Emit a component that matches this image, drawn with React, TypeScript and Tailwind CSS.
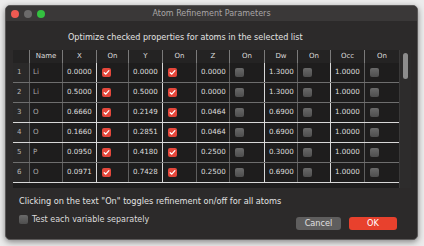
import React from "react";

const headers = ["", "Name", "X", "On", "Y", "On", "Z", "On", "Dw", "On", "Occ", "On"];

const rows = [
  ["1", "Li", "0.0000", true, "0.0000", true, "0.0000", false, "1.3000", false, "1.0000", false],
  ["2", "Li", "0.5000", true, "0.5000", true, "0.0000", false, "1.3000", false, "1.0000", false],
  ["3", "O", "0.6660", true, "0.2149", true, "0.0464", false, "0.6900", false, "1.0000", false],
  ["4", "O", "0.1660", true, "0.2851", true, "0.0464", false, "0.6900", false, "1.0000", false],
  ["5", "P", "0.0950", true, "0.4180", true, "0.2500", false, "0.3000", false, "1.0000", false],
  ["6", "O", "0.0971", true, "0.7428", true, "0.2500", false, "0.6900", false, "1.0000", false],
];

// columns whose right edge draws a bright line in the grid
const brightCols = [2, 4, 7, 9];
const brightRows = [2, 3, 5];

function Check({ on }: { on: boolean }) {
  if (!on) {
    return <div className="h-[9px] w-[9px] rounded-[2px] bg-gradient-to-b from-[#6a6a6a] to-[#4e4e4e]" />;
  }
  return (
    <div className="flex h-[9px] w-[9px] items-center justify-center rounded-[2px] bg-[#e4473b]">
      <svg width="7" height="7" viewBox="0 0 7 7">
        <path d="M1.2 3.7 L2.8 5.2 L5.9 1.6" fill="none" stroke="#fff" strokeWidth="1.2" strokeLinecap="round" strokeLinejoin="round" />
      </svg>
    </div>
  );
}

export default function App() {
  const gridCols = "grid grid-cols-[17px_33px_34px_32px_34px_34px_33px_35px_33px_33px_34px_34px]";
  return (
    <div className="h-[246px] w-[424px] bg-[#ececec] pl-[5px] pt-[5px] font-['DejaVu_Sans',sans-serif]">
      <div className="flex h-[235px] w-[413px] flex-col overflow-hidden rounded-[5px] border border-[#5a5858] bg-[#2c2a2a] shadow-[0_2px_6px_rgba(0,0,0,0.45)]">
        {/* title bar */}
        <div className="relative flex h-[15px] shrink-0 items-center bg-[#3a3838]">
          <div className="ml-[5px] flex gap-[5px]">
            <span className="h-[8px] w-[8px] rounded-full bg-[#ee5a52]" />
            <span className="h-[8px] w-[8px] rounded-full bg-[#6b6a6a]" />
            <span className="h-[8px] w-[8px] rounded-full bg-[#34c140]" />
          </div>
          <div className="absolute inset-0 flex items-center justify-center text-[8px] text-[#a8a6a6]">
            Atom Refinement Parameters
          </div>
        </div>

        <div className="ml-[62px] mt-[11px] text-[8.1px] leading-[10px] text-[#e2e2e2]">
          Optimize checked properties for atoms in the selected list
        </div>

        {/* table */}
        <div className="ml-[7px] mt-[8px] flex h-[138px] w-[398px] bg-[#1e1d1d]">
          <div className="flex flex-col">
            <div className={`${gridCols} h-[13px] bg-[#242323]`}>
              {headers.map((h, i) => (
                <div
                  key={i}
                  className={`flex items-center justify-center text-[7px] text-[#dcdcdc] ${i < 11 ? "border-r border-[#7a7a7a]" : ""}`}
                >
                  {h}
                </div>
              ))}
            </div>
            {rows.map((r, ri) => (
              <div
                key={ri}
                className={`${gridCols} h-[20px] border-b ${brightRows.includes(ri) ? "border-[#d8d8d8]" : "border-[#6e6e6e]"}`}
              >
                {r.map((c, ci) => {
                  const br = ci < 11
                    ? brightCols.includes(ci)
                      ? "border-r border-[#d8d8d8]"
                      : "border-r border-[#5e5e5e]"
                    : "";
                  if (ci === 0) {
                    return (
                      <div key={ci} className={`flex items-center bg-[#2a2929] pl-[4px] text-[7px] text-[#b8b8b8] ${br}`}>
                        {c as string}
                      </div>
                    );
                  }
                  if (typeof c === "boolean") {
                    return (
                      <div key={ci} className={`flex items-center pl-[5px] ${br}`}>
                        <Check on={c} />
                      </div>
                    );
                  }
                  return (
                    <div
                      key={ci}
                      className={`flex items-center text-[7.1px] ${ci === 1 ? "pl-[3px] text-[#a8a8a8]" : "pl-[4px] text-[#dedede]"} ${br}`}
                    >
                      {c}
                    </div>
                  );
                })}
              </div>
            ))}
          </div>
          {/* scrollbar */}
          <div className="flex w-[12px] justify-center border-l border-[#3a3939] bg-[#2d2c2c] pt-[3px]">
            <div className="h-[26px] w-[5px] rounded-full bg-[#8d8d8d]" />
          </div>
        </div>

        <div className="ml-[13px] mt-[8px] text-[8.2px] leading-[10px] text-[#e2e2e2]">
          Clicking on the text "On" toggles refinement on/off for all atoms
        </div>

        <div className="mt-[9px] flex items-start">
          <div className="ml-[13px] flex h-[9px] items-center gap-[4px]">
            <div className="h-[9px] w-[9px] rounded-[2px] bg-gradient-to-b from-[#6a6a6a] to-[#4e4e4e]" />
            <span className="text-[8px] text-[#dcdcdc]">Test each variable separately</span>
          </div>
          <div className="ml-auto mr-[20px] mt-[2px] flex gap-[8px]">
            <div className="flex h-[13px] w-[45px] items-center justify-center rounded-[3px] bg-[#5f5e5e] text-[8.2px] text-[#e0e0e0]">
              Cancel
            </div>
            <div className="flex h-[13px] w-[48px] items-center justify-center rounded-[3px] bg-[#e8412d] text-[8.2px] text-white">
              OK
            </div>
          </div>
        </div>
      </div>
    </div>
  );
}
